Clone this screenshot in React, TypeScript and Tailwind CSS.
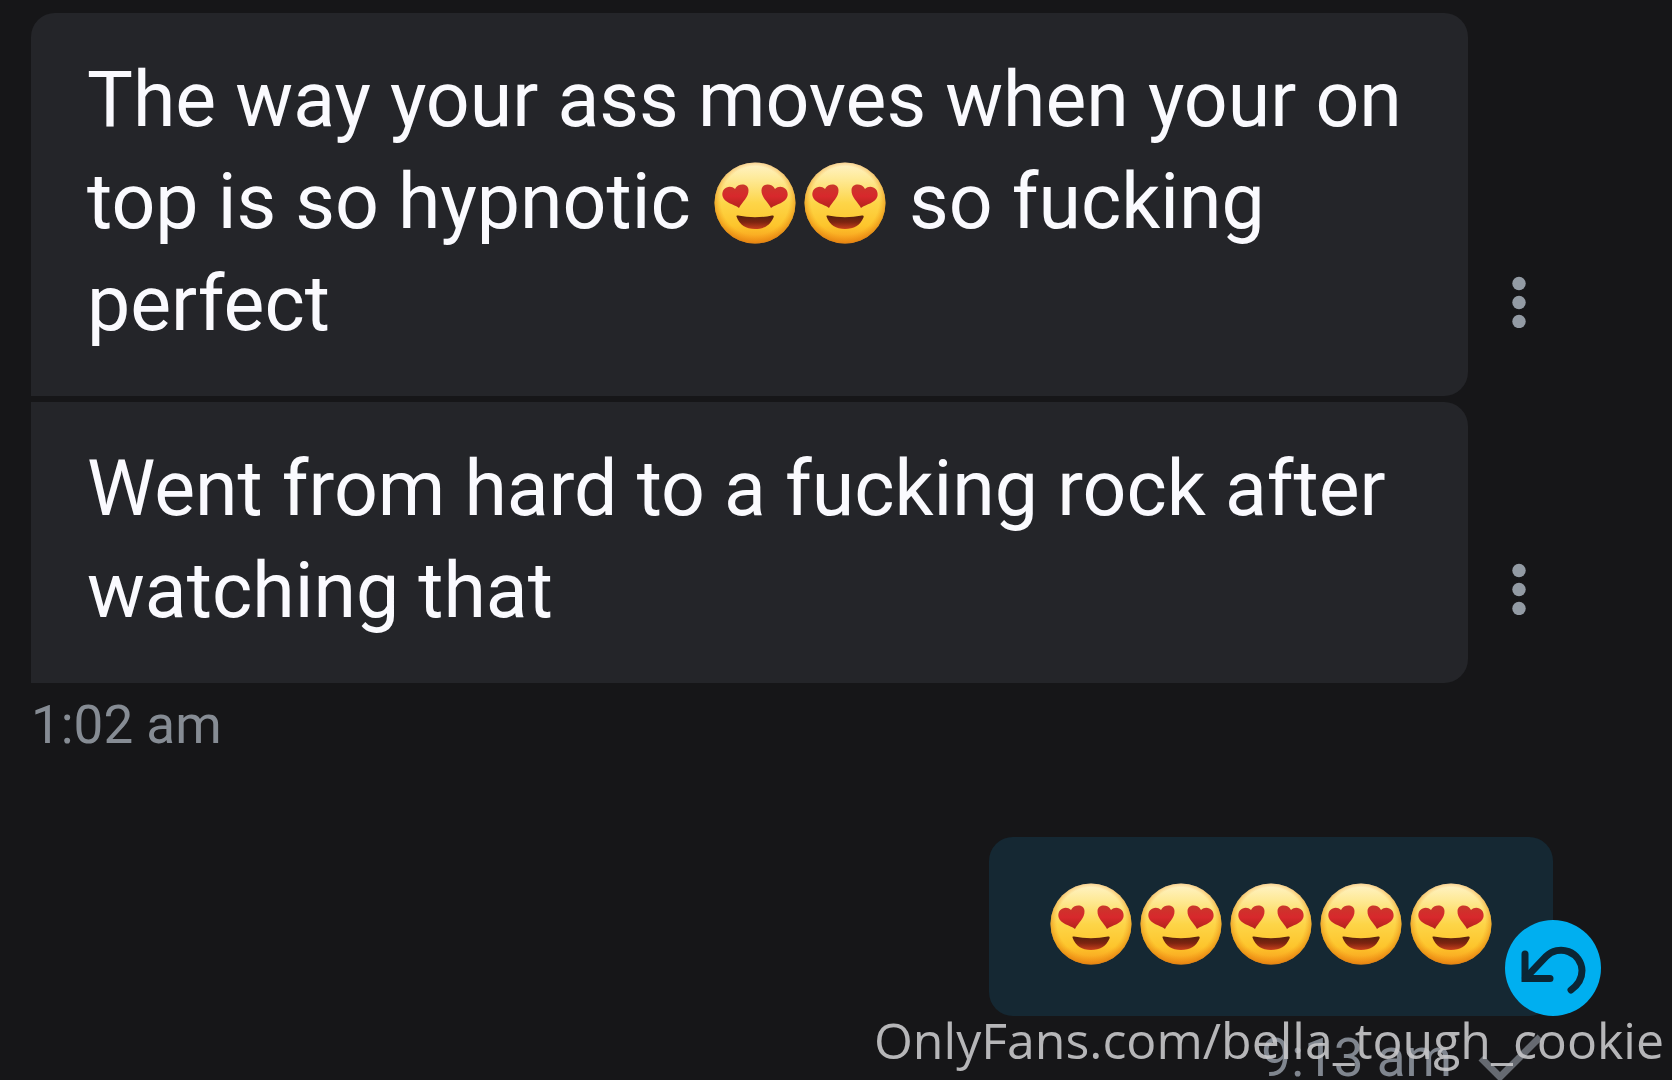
import type { ReactNode } from 'react';

const HeartEyes = () => (
  <svg viewBox="0 0 90 90" className="inline-block h-[90px] w-[90px] -my-4 align-[-4px]" role="img" aria-label="heart eyes">
    <defs>
      <linearGradient id="face" x1="0" y1="0" x2="0" y2="1">
        <stop offset="0" stopColor="#fff3c8" />
        <stop offset="0.2" stopColor="#feea98" />
        <stop offset="0.5" stopColor="#fdd548" />
        <stop offset="0.78" stopColor="#fdc52c" />
        <stop offset="1" stopColor="#f79a1c" />
      </linearGradient>
      <radialGradient id="rim" cx="0.5" cy="0.47" r="0.54">
        <stop offset="0.78" stopColor="#f08a10" stopOpacity="0" />
        <stop offset="1" stopColor="#d9760c" stopOpacity="0.75" />
      </radialGradient>
      <linearGradient id="heart" x1="0" y1="0" x2="0" y2="1">
        <stop offset="0" stopColor="#c9382b" />
        <stop offset="0.5" stopColor="#d8282c" />
        <stop offset="1" stopColor="#b3241c" />
      </linearGradient>
      <linearGradient id="mouth" x1="0" y1="0" x2="0" y2="1">
        <stop offset="0" stopColor="#55210d" />
        <stop offset="0.5" stopColor="#7d2410" />
        <stop offset="1" stopColor="#c8401c" />
      </linearGradient>
    </defs>
    <circle cx="45" cy="45" r="40.5" fill="url(#face)" />
    <circle cx="45" cy="45" r="40.5" fill="url(#rim)" />
    <path d="M29 50 C24 46 14 45 12.500 38 C11 30 20 26 25 31 C28 25 38 25 38.500 32 C39 39 32 44 29 50Z" fill="url(#heart)" />
    <path d="M61 50 C66 46 76 45 77.500 38 C79 30 70 26 65 31 C62 25 52 25 51.500 32 C51 39 58 44 61 50Z" fill="url(#heart)" />
    <path d="M26.500 58.500 Q26 57 28 57.500 Q45 61 62 57.500 Q64.500 57 63.500 59.500 C60 67.500 54 71 45 71 C36 71 29.500 67 26.500 58.500Z" fill="url(#mouth)" />
  </svg>
);

interface ReceivedProps {
  children: ReactNode;
  first?: boolean;
}

const Received = ({ children, first }: ReceivedProps) => (
  <div className="flex items-end">
    <p className={`flex-1 bg-[#242529] px-14 pt-9 pb-[41px] text-[77px] leading-[102px] text-[#fafafe] ${
      first ? 'rounded-3xl rounded-bl-none' : 'rounded-r-3xl'
    }`}>
      {children}
    </p>
    <button aria-label="Message options" className="flex w-[85px] justify-center pb-[68px] pl-[17px] text-[#939ba4]">
      <svg viewBox="0 0 16 52" className="h-[52px] w-4" fill="currentColor">
        <circle cx="8" cy="7.500" r="6.700" />
        <circle cx="8" cy="26.500" r="6.700" />
        <circle cx="8" cy="45.500" r="6.700" />
      </svg>
    </button>
  </div>
);

const App = () => (
  <div className="relative h-screen overflow-hidden bg-[#161618] font-['Roboto',sans-serif]">
    <main className="flex flex-col pt-[13px] pr-[119px] pl-[31px]">
      <section className="flex flex-col gap-1.5">
        <Received first>
          The way your ass moves when your on top is so hypnotic <span className="whitespace-nowrap"><HeartEyes /><HeartEyes /></span> so fucking perfect
        </Received>
        <Received>Went from hard to a fucking rock after watching that</Received>
      </section>
      <time className="mt-1.5 text-[53px] leading-[72px] text-[#868c94]">1:02 am</time>

      <section className="mt-[76px] flex flex-col items-end">
        <div className="relative">
          <div className="flex rounded-3xl bg-[#152833] px-[57px] pt-[58px] pb-[63px]">
            <HeartEyes />
            <HeartEyes />
            <HeartEyes />
            <HeartEyes />
            <HeartEyes />
          </div>
          <button aria-label="Undo" className="absolute -right-12 bottom-0 flex h-24 w-24 items-center justify-center rounded-full bg-[#00aff0] text-[#0b2635]">
            <svg viewBox="0 0 96 96" className="h-24 w-24" fill="none" stroke="currentColor" strokeWidth="7" strokeLinecap="round" strokeLinejoin="miter">
              <path d="M20 34v24.500H45" />
              <path d="M20.500 58L41 36.500A21 21 0 0 1 77 50.500C77 58.500 73 65 66 70" />
            </svg>
          </button>
        </div>
        <div className="mt-1.5 flex items-center gap-[26px] pr-[9px]">
          <time className="text-[53px] leading-[72px] text-[#80868f]">9:13 am</time>
          <svg viewBox="0 0 66 48" className="h-12 w-[66px] text-[#666a71]" fill="none" stroke="currentColor" strokeWidth="7">
            <path d="M3 24l19 19L62 3" />
          </svg>
        </div>
      </section>
    </main>
    <a
      href="#profile"
      className="absolute right-2 bottom-1 font-['Open_Sans',sans-serif] text-[50px] leading-[72px] text-[#c8c8ca]/90"
    >
      OnlyFans.com/bella_tough_cookie
    </a>
  </div>
);

export default App;
